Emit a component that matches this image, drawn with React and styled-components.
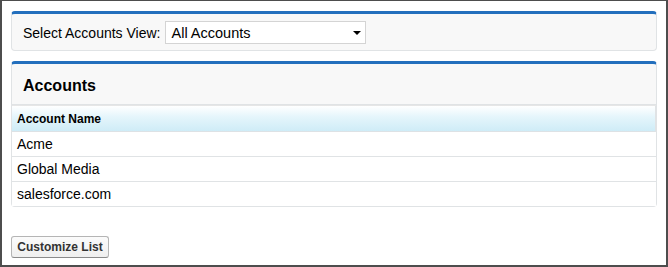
import React from 'react';
import styled, { createGlobalStyle } from 'styled-components';

const GlobalStyle = createGlobalStyle`
  html, body {
    margin: 0;
    padding: 0;
    background: #ffffff;
  }
  body {
    font-family: "Liberation Sans", Arial, sans-serif;
    color: #000000;
  }
`;

const accounts = ['Acme', 'Global Media', 'salesforce.com'];

const Frame = styled.div`
  box-sizing: border-box;
  width: 668px;
  height: 267px;
  border: 2px solid #4d4d4d;
  border-top-width: 1px;
  padding: 10px 9px 0 9px;
  background: #ffffff;
  display: flex;
  flex-direction: column;
`;

const Panel = styled.div`
  background: #f8f8f8;
  border: 1px solid #e0e3e5;
  border-top: 3px solid #236fbd;
  border-radius: 4px;
  margin-bottom: ${p => p.$gap || 0}px;
`;

const FilterBar = styled.div`
  display: flex;
  align-items: center;
  gap: 5px;
  padding: 7px 11px 6px 11px;
`;

const Label = styled.label`
  font-size: 14px;
  color: #000000;
`;

const Select = styled.div`
  box-sizing: border-box;
  width: 201px;
  height: 23px;
  background: #ffffff;
  border: 1px solid #d4d4d4;
  display: flex;
  align-items: center;
  justify-content: space-between;
  padding: 0 3px 0 5px;
  font-size: 14.5px;
  color: #000000;
`;

const Caret = styled.span`
  width: 0;
  height: 0;
  border-left: 4px solid transparent;
  border-right: 4px solid transparent;
  border-top: 4px solid #000000;
  margin-right: 1px;
`;

const PanelHeader = styled.div`
  box-sizing: border-box;
  height: 41px;
  display: flex;
  align-items: center;
  padding: 3px 11px 0 11px;
  border-bottom: 1px solid #e0e3e5;
`;

const Title = styled.h2`
  margin: 0;
  font-size: 16px;
  font-weight: bold;
  color: #000000;
`;

const Table = styled.div`
  background: #ffffff;
  border-top: 1px solid #e6e6e6;
`;

const HeadRow = styled.div`
  height: 25px;
  display: flex;
  align-items: center;
  padding: 0 5px;
  background: linear-gradient(to bottom, #ffffff 0%, #e4f5fb 45%, #cfecf7 100%);
  border-bottom: 1px solid #dde2e5;
  border-right: 1px solid #e0e3e5;
  font-size: 12px;
  font-weight: bold;
  color: #000000;
`;

const Row = styled.div`
  height: 24px;
  display: flex;
  align-items: center;
  padding: 0 5px;
  font-size: 14px;
  color: #000000;
  border-bottom: 1px solid #e0e3e5;

  &:last-child {
    border-bottom: none;
  }
`;

const Footer = styled.div`
  padding-top: 29px;
`;

const Button = styled.button`
  box-sizing: border-box;
  height: 22px;
  width: 98px;
  padding: 0;
  font-family: "Liberation Sans", Arial, sans-serif;
  font-size: 12px;
  font-weight: bold;
  color: #333333;
  background: linear-gradient(to bottom, #fbfbfb 0%, #efefef 100%);
  border: 1px solid #b5b5b5;
  border-bottom-color: #8a8a8a;
  border-radius: 3px;
`;

const App = () => (
  <>
    <GlobalStyle />
    <Frame>
      <Panel $gap={10}>
        <FilterBar>
          <Label>Select Accounts View:</Label>
          <Select>
            All Accounts
            <Caret />
          </Select>
        </FilterBar>
      </Panel>
      <Panel>
        <PanelHeader>
          <Title>Accounts</Title>
        </PanelHeader>
        <Table>
          <HeadRow>Account Name</HeadRow>
          {accounts.map(name => (
            <Row key={name}>{name}</Row>
          ))}
        </Table>
      </Panel>
      <Footer>
        <Button>Customize List</Button>
      </Footer>
    </Frame>
  </>
);

export default App;
